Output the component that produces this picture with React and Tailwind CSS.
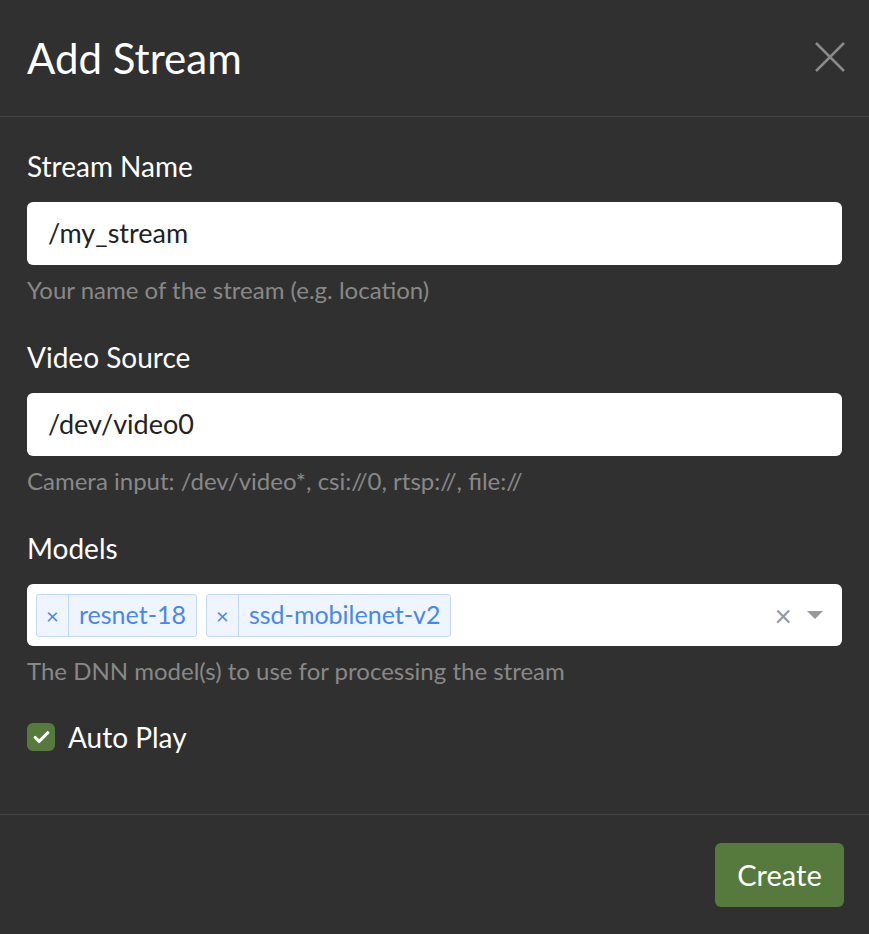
import { Check } from 'lucide-react';

const Field = ({ label, value, help }) => (
  <div className="mb-[30px]">
    <label className="mb-[16px] block text-[28px] leading-[40px] text-white">{label}</label>
    <div className="flex h-[63px] items-center rounded-[6px] bg-white px-[21px] text-[27px] text-[#222]">{value}</div>
    <p className="mt-[8px] text-[24px] leading-[34px] text-[#888]">{help}</p>
  </div>
);

const Tag = ({ text }) => (
  <div className="flex h-[43px] items-stretch rounded-[3px] border border-[#c2d9ff] bg-[#eef5ff] text-[#4a86f0]">
    <span className="flex w-[32px] items-center justify-center border-r border-[#c2d9ff] text-[22px]">×</span>
    <span className="flex items-center px-[10px] text-[25px]">{text}</span>
  </div>
);

const App = () => {
  return (
    <div className="min-h-[934px] bg-[#303030] font-['Lato',sans-serif]">
      <div className="flex h-[117px] items-center justify-between border-b border-[#444] pl-[27px] pr-[24px]">
        <h4 className="text-[42px] leading-none text-white">Add Stream</h4>
        <svg width="30" height="30" viewBox="0 0 30 30" className="mb-[2px]">
          <path d="M1 1 L29 29 M29 1 L1 29" stroke="#8a8a8a" strokeWidth="2.5" fill="none" />
        </svg>
      </div>

      <div className="px-[27px] pt-[29px] pb-[57px]">
        <Field label="Stream Name" value="/my_stream" help="Your name of the stream (e.g. location)" />
        <Field label="Video Source" value="/dev/video0" help="Camera input: /dev/video*, csi://0, rtsp://, file://" />

        <div className="mb-[29px]">
          <label className="mb-[16px] block text-[28px] leading-[40px] text-white">Models</label>
          <div className="flex h-[62px] items-center rounded-[6px] bg-white pl-[9px] pr-[19px]">
            <div className="flex flex-1 gap-[9px]">
              <Tag text="resnet-18" />
              <Tag text="ssd-mobilenet-v2" />
            </div>
            <span className="mr-[15px] text-[30px] leading-none text-[#999]">×</span>
            <span className="h-0 w-0 border-x-[8px] border-t-[8px] border-x-transparent border-t-[#999]" />
          </div>
          <p className="mt-[8px] text-[24px] leading-[34px] text-[#888]">The DNN model(s) to use for processing the stream</p>
        </div>

        <label className="flex h-[40px] items-center gap-[13px] text-[28px] text-white">
          <span className="flex h-[28px] w-[28px] items-center justify-center rounded-[6px] bg-[#56793d]">
            <Check size={19} strokeWidth={4} className="text-white" />
          </span>
          Auto Play
        </label>
      </div>

      <div className="flex justify-end border-t border-[#444] px-[25px] pt-[28px]">
        <button type="button" className="h-[64px] w-[129px] rounded-[6px] bg-[#56793d] text-[29px] text-white">
          Create
        </button>
      </div>
    </div>
  );
};

export default App;
